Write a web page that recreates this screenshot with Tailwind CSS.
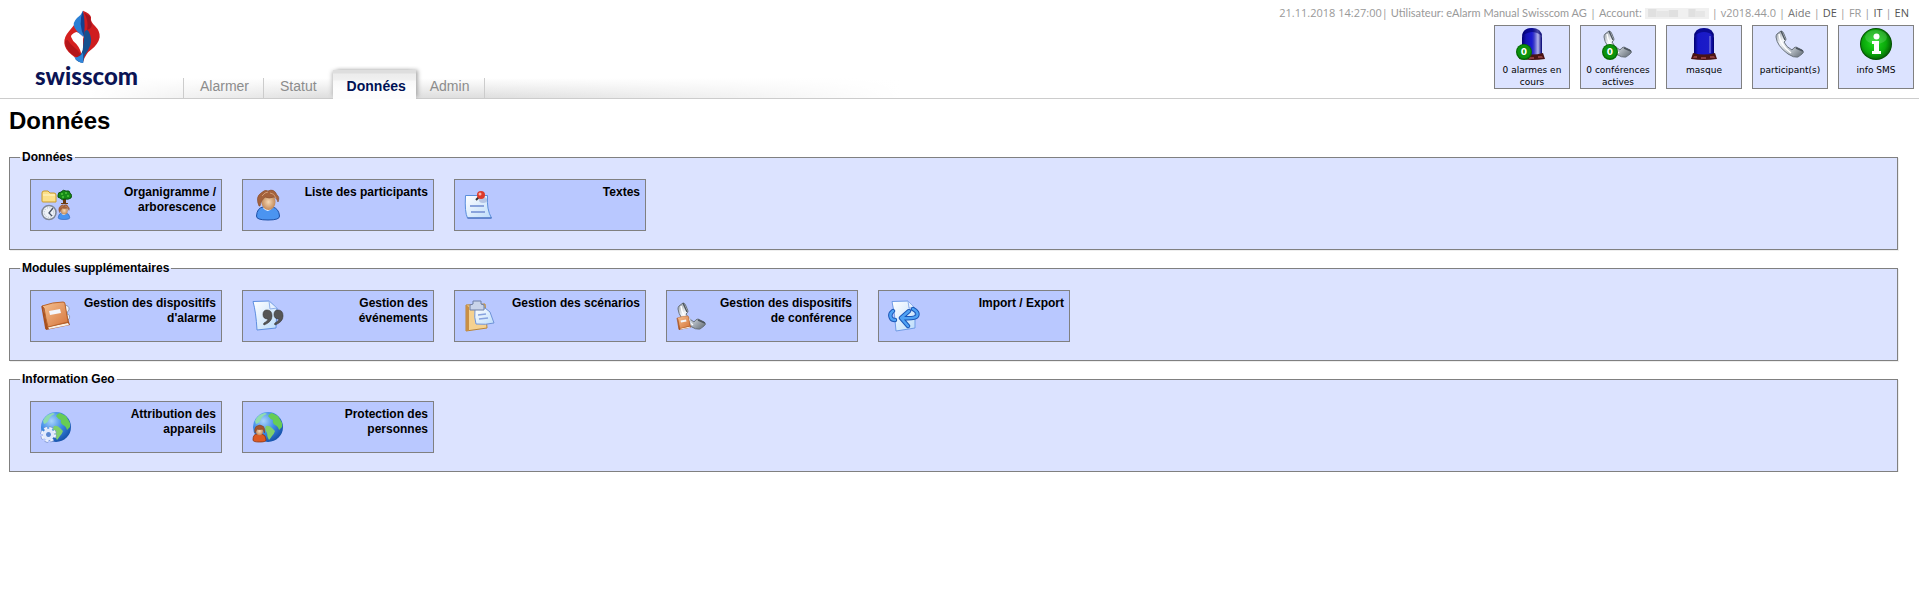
<!DOCTYPE html>
<html lang="fr">
  <head>
    <meta charset="UTF-8" />
    <meta name="viewport" content="width=device-width, initial-scale=1.0" />
    <title>eAlarm - Données</title>
    <script src="https://cdn.jsdelivr.net/npm/@tailwindcss/browser@4"></script>
  </head>
  <body class="bg-white font-['Liberation_Sans',Arial,sans-serif] text-black">
    <!-- Shared icon shapes -->
    <svg class="absolute w-0 h-0" aria-hidden="true">
      <defs>
        <linearGradient id="dome">
          <stop offset="0" stop-color="#00006e" />
          <stop offset=".2" stop-color="#1414b4" />
          <stop offset=".5" stop-color="#1c1cd2" />
          <stop offset=".6" stop-color="#3c3cc8" />
          <stop offset=".8" stop-color="#b4b4ec" />
          <stop offset="1" stop-color="#000070" />
        </linearGradient>
        <linearGradient id="domeDark">
          <stop offset="0" stop-color="#00006e" />
          <stop offset=".2" stop-color="#1818c8" />
          <stop offset=".8" stop-color="#1c1cc8" />
          <stop offset="1" stop-color="#000070" />
        </linearGradient>
        <linearGradient id="metal" x1="0" y1="0" x2="1" y2="1">
          <stop offset="0" stop-color="#8f979f" />
          <stop offset=".3" stop-color="#f2f5f8" />
          <stop offset=".6" stop-color="#c3cad2" />
          <stop offset="1" stop-color="#5d666f" />
        </linearGradient>
        <radialGradient id="green" cx=".45" cy=".45" r=".6">
          <stop offset="0" stop-color="#1fdc1f" />
          <stop offset=".65" stop-color="#0aa80a" />
          <stop offset="1" stop-color="#045a04" />
        </radialGradient>
        <radialGradient id="ocean" cx=".35" cy=".3" r=".75">
          <stop offset="0" stop-color="#a9d4fb" />
          <stop offset=".5" stop-color="#3f8ce6" />
          <stop offset="1" stop-color="#1450a8" />
        </radialGradient>
        <linearGradient id="leather" x1="0" y1="0" x2="1" y2="1">
          <stop offset="0" stop-color="#f6c394" />
          <stop offset="1" stop-color="#d5743a" />
        </linearGradient>
        <linearGradient id="sheet" x1="0" y1="0" x2="1" y2="1">
          <stop offset="0" stop-color="#ffffff" />
          <stop offset="1" stop-color="#bcdcfb" />
        </linearGradient>
        <radialGradient id="skin" cx=".5" cy=".5" r=".6">
          <stop offset="0" stop-color="#f7d9b4" />
          <stop offset="1" stop-color="#b87a48" />
        </radialGradient>
      </defs>

      <symbol id="i-base" viewBox="0 0 32 32">
        <path d="M5 25Q16 28 27 25L29 31Q16 33 3 31z" fill="#4a1414" />
        <path d="M6 28l-1 2h4v-2zM13 29v2h5v-2zM22 28v2h5l-1-2z" fill="#8a3c3c" />
      </symbol>

      <symbol id="i-phone" viewBox="0 0 32 32">
        <path
          d="M3 6L7 3Q9 3 10 6L12 11Q12 13 10 14Q12 19 18 22Q20 19 22 19L28 22Q31 24 28 26L24 29Q20 30 14 26Q3 18 2 9Q2 7 3 6z"
          fill="url(#metal)"
          stroke="#6a737d"
        />
        <path d="M5 6q1 11 12 19" stroke="#fff" stroke-width="1.5" fill="none" />
        <path d="M7 3l4 9M22 20l7 3" stroke="#4c555f" stroke-width="1.4" fill="none" />
      </symbol>

      <symbol id="i-badge" viewBox="0 0 16 16">
        <circle cx="8" cy="8" r="8" fill="#056a05" />
        <circle cx="8" cy="7.600" r="6.800" fill="#0c930c" />
      </symbol>

      <symbol id="i-person" viewBox="0 0 32 32">
        <path
          d="M4.500 27Q5 19 11 18L21 18Q27 20 27.500 27Q28 31 16 31Q4 31 4.500 27z"
          fill="#4b94f0"
          stroke="#1c4fa6"
        />
        <path d="M11 19q5 6 9 0l-3-2h-4z" fill="#eef5ff" />
        <ellipse cx="16.500" cy="13" rx="7" ry="8" fill="url(#skin)" />
        <path
          d="M7 17Q3 8 9 4Q13 0 16 2Q22-1 25 6Q28 8 26 13Q25 9 22 8Q17 10 13 8Q9 11 8 17z"
          fill="#a4623c"
          stroke="#85492a"
          stroke-width=".6"
        />
        <path d="M10 7q3-4 6-4M18 4q4 0 6 5" stroke="#d09a74" fill="none" />
      </symbol>

      <symbol id="i-book" viewBox="0 0 32 32">
        <path d="M23 5q7 0 6 5q-2 2-2 4q4 1 2 5l-3 3z" fill="#eef2fa" stroke="#8b9bb8" />
        <path d="M3 7L6 30L30 25L29 22L24 2z" fill="#a8501e" />
        <path d="M8 27l20-4 1 2-20 4z" fill="#f9efe2" />
        <path d="M2 6Q13 2 23 2Q25 2 25 4L28 22L8 27Q6 20 4 8z" fill="url(#leather)" stroke="#b9642c" />
        <path d="M2 6l4 23" stroke="#a8501e" stroke-width="1.5" />
        <path d="M9 11l11-2 1 4-11 2z" fill="#f4f6fb" />
      </symbol>

      <symbol id="i-globe" viewBox="0 0 32 32">
        <circle cx="16" cy="16" r="15" fill="url(#ocean)" />
        <path d="M3 10Q6 3 13 2L15 3Q11 4 9 8Q8 12 4 13z" fill="#8fdcae" />
        <path
          d="M16 5Q18 2 20 2L26 5L30 12L30 16L27 19Q26 15 23 14Q20 12 21 9Q18 8 16 5z"
          fill="#66cc55"
        />
        <path d="M14 15Q17 14 20 17L23 20Q22 23 20 25Q18 28 17 29Q15 26 15 22Q12 18 14 15z" fill="#7fd06a" />
      </symbol>
    </svg>

    <header
      class="flex items-end justify-between border-b border-[#cccccc] bg-[linear-gradient(to_right,#fff_90px,transparent_320px,transparent_480px,#fff_900px),linear-gradient(to_bottom,#fff_calc(100%-20px),#dedede)]"
    >
      <div class="flex items-end">
        <!-- Logo -->
        <a href="#" class="flex flex-col items-center w-[183px] pr-[10px] pb-[10px]" aria-label="swisscom">
          <svg class="w-[38px] h-[54px] mr-[10px]" viewBox="186 30 114 162">
            <path
              d="M226 66Q214 82 204 94Q188 112 190 130Q192 150 212 164Q226 174 230 182L246 188L250 120L238 92z"
              fill="#d5201f"
            />
            <path d="M192 122Q192 146 214 164Q230 174 242 172Q236 154 222 144Q208 134 200 120z" fill="#b3161a" />
            <path d="M226 96Q210 102 210 110Q214 122 226 132Q240 148 243 172Q249 140 247 112Q240 100 226 96z" fill="#fff" />
            <path
              d="M246 32Q240 46 228 54Q214 68 220 82Q228 98 250 112Q262 92 258 72Q252 50 246 32z"
              fill="#2b7fd4"
            />
            <path d="M246 32Q230 70 250 112Q262 74 246 32z" fill="#14418f" />
            <path
              d="M246 32Q268 40 270 52Q268 66 282 78Q298 94 296 112Q292 132 272 148Q254 160 246 186L246 120Q256 82 246 32z"
              fill="#cf1d1f"
            />
            <path d="M250 38Q264 66 258 90Q278 84 270 66Q266 58 268 50z" fill="#a01420" />
            <path
              d="M250 96Q258 84 264 96Q274 116 268 136Q260 156 250 168L246 188Q232 188 222 176Q240 170 245 150Q249 120 250 96z"
              fill="#17508f"
            />
            <path d="M220 172Q236 172 246 158L247 189Q230 188 220 172z" fill="#2f86da" />
          </svg>
          <span class="font-['Lato',sans-serif] font-black text-2xl leading-[24px] text-[#0b1455]">swisscom</span>
        </a>

        <!-- Main tabs -->
        <nav class="flex items-end text-sm leading-[16px] text-[#8c8c8c]">
          <a href="#" class="h-[20px] pl-4 pr-[14px] border-l border-[#cccccc]">Alarmer</a>
          <a href="#" class="h-[20px] px-4 border-l border-[#cccccc]">Statut</a>
          <a
            href="#"
            class="relative h-[29px] -mb-px pl-[14px] pr-[10px] pt-2 font-bold text-[#001155] bg-[linear-gradient(to_bottom,#dedede_3px,#ececec_4px,#f0f0f0_10px,#f8f8f8_11px,#fdfdfd_20px)] shadow-[3px_-1px_4px_-1px_#aaaaaa,-3px_-1px_4px_-2px_#bbbbbb] [clip-path:inset(-4px_-8px_0_-8px)]"
            >Données</a
          >
          <a href="#" class="h-[20px] pl-[14px] pr-[15px] border-r border-[#cccccc]">Admin</a>
        </nav>
      </div>

      <div class="flex flex-col items-end pt-[5px] pr-[5px] pb-[9px]">
        <!-- Session info -->
        <div
          class="flex items-center gap-[3px] pr-[5px] mb-1 font-['Open_Sans',sans-serif] text-[11px] leading-[16px] text-[#999999] whitespace-nowrap"
        >
          <span>21.11.2018 14:27:00|</span>
          <span class="font-['Lato',sans-serif]">Utilisateur: eAlarm Manual Swisscom AG</span>
          <span>|</span>
          <span class="font-['Lato',sans-serif]">Account:</span>
          <svg class="w-16 h-[11px]" viewBox="0 0 62 11" preserveAspectRatio="none">
            <path d="M0 0h62v11h-62z" fill="#f0f0f0" />
            <path d="M3 1h8v8h-8zM23 2h9v7h-9zM42 1h7v8h-7z" fill="#e0e0e0" />
            <path d="M11 3h12v6h-12zM49 3h9v6h-9z" fill="#e6e6e6" />
          </svg>
          <span>|</span>
          <span>v2018.44.0</span>
          <span>|</span>
          <a href="#" class="text-[#777777]">Aide</a>
          <span>|</span>
          <a href="#" class="text-[#555555]">DE</a>
          <span>|</span>
          <span>FR</span>
          <span>|</span>
          <a href="#" class="text-[#555555]">IT</a>
          <span>|</span>
          <a href="#" class="text-[#555555]">EN</a>
        </div>

        <!-- Quick buttons -->
        <div class="flex gap-[10px] font-['DejaVu_Sans',Verdana,sans-serif] text-[9px] leading-[12px]">
          <button type="button" class="flex flex-col items-center w-[76px] h-16 px-1 pt-[2px] border border-[#808080] bg-[#dce3ff]">
            <svg class="w-8 h-8 mb-1 shrink-0" viewBox="0 0 32 32">
              <path d="M6 27V10Q6 0 16 0T26 10V27z" fill="url(#dome)" />
              <path d="M6 8Q7 0 16 0T26 8Q16 0 6 8z" fill="#00006e" opacity=".6" />
              <use href="#i-base" />
              <use href="#i-badge" x="0" y="16" width="16" height="16" />
              <text x="8" y="27" text-anchor="middle" font-weight="bold" font-size="9" fill="#fff">0</text>
            </svg>
            <span>0 alarmes en cours</span>
          </button>
          <button type="button" class="flex flex-col items-center w-[76px] h-16 px-1 pt-[2px] border border-[#808080] bg-[#dce3ff]">
            <svg class="w-8 h-8 mb-1 shrink-0" viewBox="0 0 32 32">
              <use href="#i-phone" />
              <use href="#i-badge" x="0" y="16" width="16" height="16" />
              <text x="8" y="27" text-anchor="middle" font-weight="bold" font-size="9" fill="#fff">0</text>
            </svg>
            <span>0 conférences actives</span>
          </button>
          <button type="button" class="flex flex-col items-center w-[76px] h-16 px-1 pt-[2px] border border-[#808080] bg-[#dce3ff]">
            <svg class="w-8 h-8 mb-1 shrink-0" viewBox="0 0 32 32">
              <path d="M6 27V10Q6 0 16 0T26 10V27z" fill="url(#domeDark)" />
              <path d="M6 8Q7 0 16 0T26 8Q16 0 6 8z" fill="#00006e" opacity=".6" />
              <path d="M22 8v17" stroke="#6a6ad8" stroke-width="1.500" />
              <use href="#i-base" />
            </svg>
            <span>masque</span>
          </button>
          <button type="button" class="flex flex-col items-center w-[76px] h-16 px-1 pt-[2px] border border-[#808080] bg-[#dce3ff]">
            <svg class="w-8 h-8 mb-1 shrink-0" viewBox="0 0 32 32">
              <use href="#i-phone" />
            </svg>
            <span>participant(s)</span>
          </button>
          <button type="button" class="flex flex-col items-center w-[76px] h-16 px-1 pt-[2px] border border-[#808080] bg-[#dce3ff]">
            <svg class="w-8 h-8 mb-1 shrink-0" viewBox="0 0 32 32">
              <circle cx="16" cy="16" r="16" fill="#045004" />
              <circle cx="16" cy="16" r="15" fill="url(#green)" />
              <ellipse cx="16" cy="9" rx="11" ry="7" fill="#fff" opacity=".15" />
              <circle cx="16.500" cy="8.500" r="3" fill="#fff" />
              <path d="M12 13h7v10h2v3h-9v-3h2v-7h-2z" fill="#fff" />
            </svg>
            <span>info SMS</span>
          </button>
        </div>
      </div>
    </header>

    <main class="pl-[9px] pr-[21px] pt-2">
      <h1 class="text-2xl leading-[28px] font-bold">Données</h1>

      <div class="flex flex-col gap-[11px] pt-[15px] text-xs leading-[15px] font-bold">
        <!-- Données -->
        <fieldset class="border border-[#808080] bg-[#dce3ff] shadow-[1px_1px_0_#eeeeee] px-5 pt-[14px] pb-[18px]">
          <legend class="-ml-[10px] px-[2px]">Données</legend>
          <div class="flex flex-wrap gap-5">
            <button type="button" class="flex items-start justify-between w-48 h-[52px] pl-[9px] pr-[5px] border border-[#808080] bg-[#b9c8ff]">
              <svg class="w-8 h-8 mt-[9px] shrink-0" viewBox="0 0 32 32">
                <path d="M2 4q0-2 2-2h4l2 2h4q2 0 2 2v7H3q-1 0-1-1z" fill="#fbe08a" stroke="#c99a2a" />
                <path d="M3 6h12" stroke="#fff6cf" />
                <path d="M23 8h3v6h2v1h-7v-1h2z" fill="#6b3a12" />
                <path d="M18 6q0-3 3-3q2-3 5-1q4-1 4 2q3 2 1 5q-3 2-6 1q-3 2-5-1q-3 0-2-3z" fill="#168a16" stroke="#063f06" stroke-width=".8" />
                <path d="M21 5h2M25 4h2M27 7h2M22 8h2" stroke="#6be04a" />
                <circle cx="9" cy="23.500" r="7" fill="#eef2f8" stroke="#7f8796" stroke-width="1.600" />
                <circle cx="9" cy="23.500" r="4.800" fill="none" stroke="#a9b2c2" stroke-dasharray="1 1.500" />
                <path d="M13 19l-4 5 3 3" stroke="#4a5468" stroke-width="1.300" fill="none" />
                <use href="#i-person" x="16" y="15" width="16" height="16" />
              </svg>
              <span class="max-w-[135px] pt-[5px] text-right">Organigramme / arborescence</span>
            </button>
            <button type="button" class="flex items-start justify-between w-48 h-[52px] pl-[9px] pr-[5px] border border-[#808080] bg-[#b9c8ff]">
              <svg class="w-8 h-8 mt-[9px] shrink-0" viewBox="0 0 32 32">
                <use href="#i-person" />
              </svg>
              <span class="max-w-[135px] pt-[5px] text-right">Liste des participants</span>
            </button>
            <button type="button" class="flex items-start justify-between w-48 h-[52px] pl-[9px] pr-[5px] border border-[#808080] bg-[#b9c8ff]">
              <svg class="w-8 h-8 mt-[9px] shrink-0" viewBox="0 0 32 32">
                <path d="M1.500 6.500h22q-1 14 4 22.500h-24q-3-6-2-22.500z" fill="url(#sheet)" stroke="#5a8fdc" />
                <path d="M27.500 29h-24" stroke="#3c5fb0" />
                <path d="M6 17h14M7 23h14" stroke="#8aa4dc" stroke-width="2" />
                <ellipse cx="19" cy="11" rx="4" ry="3" fill="#8c9ccc" opacity=".5" />
                <path d="M12 11l4-4" stroke="#333" stroke-width="2" />
                <circle cx="17" cy="6" r="4" fill="#dc3a2a" />
                <circle cx="16" cy="5" r="1.500" fill="#f9b4a8" />
              </svg>
              <span class="max-w-[135px] pt-[5px] text-right">Textes</span>
            </button>
          </div>
        </fieldset>

        <!-- Modules supplémentaires -->
        <fieldset class="border border-[#808080] bg-[#dce3ff] shadow-[1px_1px_0_#eeeeee] px-5 pt-[14px] pb-[18px]">
          <legend class="-ml-[10px] px-[2px]">Modules supplémentaires</legend>
          <div class="flex flex-wrap gap-5">
            <button type="button" class="flex items-start justify-between w-48 h-[52px] pl-[9px] pr-[5px] border border-[#808080] bg-[#b9c8ff]">
              <svg class="w-8 h-8 mt-[9px] shrink-0" viewBox="0 0 32 32">
                <use href="#i-book" />
              </svg>
              <span class="max-w-[135px] pt-[5px] text-right">Gestion des dispositifs d'alarme</span>
            </button>
            <button type="button" class="flex items-start justify-between w-48 h-[52px] pl-[9px] pr-[5px] border border-[#808080] bg-[#b9c8ff]">
              <svg class="w-8 h-8 mt-[9px] shrink-0" viewBox="0 0 32 32">
                <path d="M1 1.500L17 1L25 8L24 28L5 30Q4 12 1 1.500z" fill="url(#sheet)" stroke="#5f8fe0" />
                <path d="M17 1l1 8 7-1z" fill="#e6f0ff" stroke="#8fb0ea" />
                <g fill="#555" stroke="#333" stroke-width=".6">
                  <path d="M15 10q5 0 5 6t-8 9q-1-1 0-2q4-2 4-4q-5 0-5-4.500t4-4.500z" />
                  <path d="M26 10q5 0 5 6t-8 9q-1-1 0-2q4-2 4-4q-5 0-5-4.500t4-4.500z" />
                </g>
              </svg>
              <span class="max-w-[135px] pt-[5px] text-right">Gestion des événements</span>
            </button>
            <button type="button" class="flex items-start justify-between w-48 h-[52px] pl-[9px] pr-[5px] border border-[#808080] bg-[#b9c8ff]">
              <svg class="w-8 h-8 mt-[9px] shrink-0" viewBox="0 0 32 32">
                <path d="M2 5L21 4L23 28L2 31z" fill="#f5d190" stroke="#b98436" />
                <path d="M2 5l3 2v24l-3 0z" fill="#c98f45" />
                <path d="M11 9l10-1 5 4 4 11q-8 2-18 1q-2-6-1-15z" fill="url(#sheet)" stroke="#6f93d8" />
                <path d="M14 15l8-1M15 19l9-1" stroke="#86a2de" stroke-width="1.300" />
                <path d="M6 5l3-1V1h8v3l3 1v5H6z" fill="#c9d4ea" stroke="#6c7ea6" />
              </svg>
              <span class="max-w-[135px] pt-[5px] text-right">Gestion des scénarios</span>
            </button>
            <button type="button" class="flex items-start justify-between w-48 h-[52px] pl-[9px] pr-[5px] border border-[#808080] bg-[#b9c8ff]">
              <svg class="w-8 h-8 mt-[9px] shrink-0" viewBox="0 0 32 32">
                <use href="#i-phone" />
                <use href="#i-book" x="0" y="15" width="16" height="16" />
              </svg>
              <span class="max-w-[135px] pt-[5px] text-right">Gestion des dispositifs de conférence</span>
            </button>
            <button type="button" class="flex items-start justify-between w-48 h-[52px] pl-[9px] pr-[5px] border border-[#808080] bg-[#b9c8ff]">
              <svg class="w-8 h-8 mt-[9px] shrink-0" viewBox="0 0 32 32">
                <path d="M4 1.500L20 1L27 8L27 28L8 31Q7 14 4 1.500z" fill="url(#sheet)" stroke="#6f9be6" />
                <path d="M20 1l1 7 6 0z" fill="#e6f0ff" stroke="#8fb0ea" />
                <g fill="none" stroke-linecap="round" stroke-linejoin="round">
                  <path d="M5 11Q1 14 3 18Q4 20 7 20M25 9Q31 12 29 16Q27 19 14 18M21 11L13 18L20 26" stroke="#1b57b8" stroke-width="4.400" />
                  <path d="M5 11Q1 14 3 18Q4 20 7 20M25 9Q31 12 29 16Q27 19 14 18M21 11L13 18L20 26" stroke="#4fa2f4" stroke-width="2.400" />
                </g>
              </svg>
              <span class="max-w-[135px] pt-[5px] text-right">Import / Export</span>
            </button>
          </div>
        </fieldset>

        <!-- Information Geo -->
        <fieldset class="border border-[#808080] bg-[#dce3ff] shadow-[1px_1px_0_#eeeeee] px-5 pt-[14px] pb-[18px]">
          <legend class="-ml-[10px] px-[2px]">Information Geo</legend>
          <div class="flex flex-wrap gap-5">
            <button type="button" class="flex items-start justify-between w-48 h-[52px] pl-[9px] pr-[5px] border border-[#808080] bg-[#b9c8ff]">
              <svg class="w-8 h-8 mt-[9px] shrink-0" viewBox="0 0 32 32">
                <use href="#i-globe" />
                <circle cx="8.500" cy="23.500" r="6.500" fill="none" stroke="#7f95cc" stroke-width="3.500" stroke-dasharray="3.100 2" />
                <circle cx="8.500" cy="23.500" r="6.300" fill="none" stroke="#eef3ff" stroke-width="2.500" stroke-dasharray="2.900 2.050" />
                <circle cx="8.500" cy="23.500" r="4" fill="none" stroke="#e2eafc" stroke-width="3.500" />
                <circle cx="8.500" cy="23.500" r="2.200" fill="#5b86d0" />
              </svg>
              <span class="max-w-[135px] pt-[5px] text-right">Attribution des appareils</span>
            </button>
            <button type="button" class="flex items-start justify-between w-48 h-[52px] pl-[9px] pr-[5px] border border-[#808080] bg-[#b9c8ff]">
              <svg class="w-8 h-8 mt-[9px] shrink-0" viewBox="0 0 32 32">
                <use href="#i-globe" />
                <path d="M1 29q0-6 4-6h5q4 1 4 6q0 2-6.500 2t-6.500-2z" fill="#dc5a22" stroke="#8e3510" stroke-width=".8" />
                <ellipse cx="7.500" cy="20" rx="3.600" ry="4.200" fill="url(#skin)" />
                <path d="M3 22q-1-4 1-6.500q4-3 7.500 0q2 3 1 6.500q-1-3-2-4q-3 1-5.500 0q-1 2-2 4z" fill="#a4562e" stroke="#7d3c1c" stroke-width=".5" />
              </svg>
              <span class="max-w-[135px] pt-[5px] text-right">Protection des personnes</span>
            </button>
          </div>
        </fieldset>
      </div>
    </main>
  </body>
</html>
